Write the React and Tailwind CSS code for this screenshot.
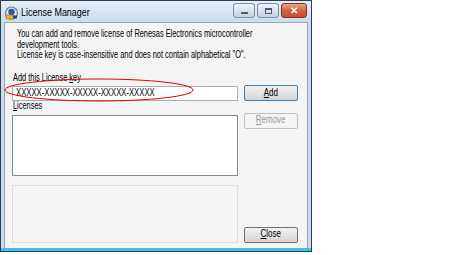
import React from "react";

const font = { fontFamily: '"Liberation Sans", Arial, sans-serif' };

// reference text is rendered in a narrow UI face; squeeze Liberation Sans to match widths
const T = ({ children, className = "" }) => (
  <span className={`inline-block whitespace-nowrap origin-left scale-x-[0.74] ${className}`}>{children}</span>
);

const Btn = ({ children, disabled, focused }) => (
  <div
    className={`w-[54px] h-[16px] rounded-[2px] border flex items-center justify-center text-[10px] ${
      disabled
        ? "border-[#c0c0c0] bg-[#f4f4f4] text-[#9a9a9a]"
        : focused
        ? "border-[#3c7fb1] bg-gradient-to-b from-[#f2f2f2] to-[#d4d4d4] text-black"
        : "border-[#707070] bg-gradient-to-b from-[#f2f2f2] to-[#d4d4d4] text-black"
    }`}
  >
    <span className="inline-block whitespace-nowrap scale-x-[0.8]">{children}</span>
  </div>
);

const AppIcon = () => (
  <svg width="15" height="14" viewBox="0 0 15 14">
    <circle cx="7.5" cy="7" r="6" fill="#dfe6ee" stroke="#6b7b8c" strokeWidth="1.2" />
    <circle cx="7.5" cy="6" r="3.2" fill="#2a5db0" />
    <rect x="2" y="9" width="8" height="4" rx="1" fill="#f2b21c" stroke="#a06a0a" strokeWidth="0.6" />
    <rect x="9" y="9.5" width="4" height="3" fill="#2a3f8f" />
  </svg>
);

const TitleButtons = () => (
  <div className="flex items-start gap-[2px] mt-[2px]">
    <div className="w-[22px] h-[15px] rounded-[3px] border border-[#7d8fa3] bg-gradient-to-b from-[#eef3f8] to-[#c6d3e0] flex items-center justify-center">
      <div className="w-[7px] h-[2px] bg-[#4b5d70] mt-[4px]" />
    </div>
    <div className="w-[22px] h-[15px] rounded-[3px] border border-[#7d8fa3] bg-gradient-to-b from-[#eef3f8] to-[#c6d3e0] flex items-center justify-center">
      <div className="w-[7px] h-[6px] border border-[#4b5d70] border-t-2" />
    </div>
    <div className="w-[26px] h-[15px] rounded-[3px] border border-[#7a3524] bg-gradient-to-b from-[#e7a58e] via-[#d3603f] to-[#c2502f] flex items-center justify-center text-white text-[10px] font-bold leading-none">
      ✕
    </div>
  </div>
);

export default function App() {
  return (
    <div className="w-[474px] h-[255px] bg-white relative" style={font}>
      <div className="w-[312px] h-[252px] border border-[#2e3e4e] border-b-0 bg-[#c9dbec] flex flex-col">
        <div className="h-[21px] flex items-start justify-between pl-[3px] pr-[4px] bg-gradient-to-b from-[#e6eef6] to-[#cbdcec]">
          <div className="flex items-center gap-[2px] mt-[3px]">
            <AppIcon />
            <span className="inline-block whitespace-nowrap origin-left scale-x-[0.78] text-[11.5px] text-black">
              License Manager
            </span>
          </div>
          <TitleButtons />
        </div>
        <div className="flex-1 mx-[3px] bg-[#f4f4f4] border border-[#9aa8b6] border-b-0 flex flex-col pl-[7px] pr-[9px] text-[10px] leading-[10.5px] text-black">
          <div className="pl-[5px] pt-[6px] flex flex-col">
            <T>You can add and remove license of Renesas Electronics microcontroller</T>
            <T>development tools.</T>
            <T>License key is case-insensitive and does not contain alphabetical "O".</T>
          </div>
          <div className="mt-[12px] pl-[1px]">
            <T>
              Add this License <span className="underline">k</span>ey
            </T>
          </div>
          <div className="flex items-center gap-[6px] mt-[2px]">
            <div className="w-[227px] h-[15px] border border-[#abadb3] bg-white flex items-center pl-[3px] text-[10px]">
              <span className="inline-block whitespace-nowrap origin-left scale-x-[0.77]">XXXXX-XXXXX-XXXXX-XXXXX-XXXXX</span>
            </div>
            <Btn focused>
              <span className="underline">A</span>dd
            </Btn>
          </div>
          <div className="mt-[0px] pl-[1px]">
            <T>
              <span className="underline">L</span>icenses
            </T>
          </div>
          <div className="flex items-start gap-[6px] mt-[1px]">
            <div className="w-[227px] h-[61px] mt-[2px] border border-[#828790] bg-white" />
            <Btn disabled>
              <span className="underline">R</span>emove
            </Btn>
          </div>
          <div className="flex items-end gap-[6px] mt-[9px]">
            <div className="w-[227px] h-[58px] border border-[#dcdce4] bg-[#f4f4f4]" />
            <Btn>
              <span className="underline">C</span>lose
            </Btn>
          </div>
        </div>
        <div className="h-[3px] bg-[#3fc3e8]" />
        <div className="h-[1px] bg-[#2e3e4e]" />
      </div>
      <svg className="absolute left-[4px] top-[78px]" width="190" height="24" viewBox="0 0 190 24">
        <ellipse cx="95" cy="12" rx="94" ry="11" fill="none" stroke="#e00000" strokeWidth="1" />
      </svg>
    </div>
  );
}
